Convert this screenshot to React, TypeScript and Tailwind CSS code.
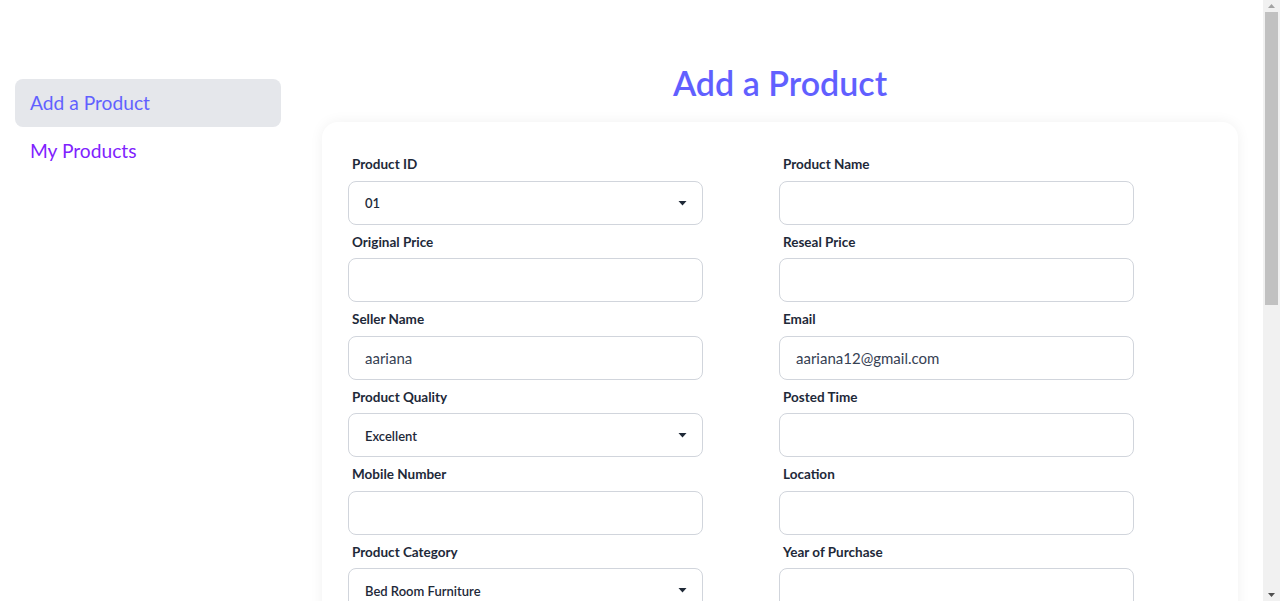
import React from "react";

function Caret() {
  return (
    <svg width="9" height="6" viewBox="0 0 9 6" className="shrink-0">
      <path d="M0.5 1 L8.5 1 L4.5 5.5 Z" fill="#1f2937" />
    </svg>
  );
}

function Label({ children }: { children: React.ReactNode }) {
  return (
    <div className="px-1 pt-[9px] pb-[7px] text-[13.5px] leading-[17.5px] font-bold text-gray-800">{children}</div>
  );
}

function TextField({ label, value }: { label: string; value?: string }) {
  return (
    <div className="flex flex-col">
      <Label>{label}</Label>
      <div className="w-[355px] h-[44px] rounded-lg border border-gray-300 bg-white flex items-center px-4 pt-[2px] text-[15px] text-gray-700">
        {value}
      </div>
    </div>
  );
}

function SelectField({ label, value }: { label: string; value: string }) {
  return (
    <div className="flex flex-col">
      <Label>{label}</Label>
      <div className="w-[355px] h-[44px] rounded-lg border border-gray-300 bg-white flex items-center justify-between pl-4 pr-[15px] text-[13px] font-semibold text-gray-800">
        <span className="pt-[3px]">{value}</span>
        <Caret />
      </div>
    </div>
  );
}

export default function App() {
  return (
    <div
      className="min-h-[1180px] bg-white flex pl-[15px]"
      style={{ fontFamily: 'Lato, "Open Sans", sans-serif' }}
    >
      <aside className="w-[266px] shrink-0 pt-[79px]">
        <div className="h-[48px] rounded-lg bg-gray-200 flex items-center px-[15px] text-[19.2px] text-indigo-500">
          Add a Product
        </div>
        <div className="h-[48px] flex items-center px-[15px] text-[19.2px] text-violet-600">My Products</div>
      </aside>
      <main className="ml-[41px] w-[916px] shrink-0 pt-[63px]">
        <h1 className="text-center text-[34px] leading-[40px] font-semibold text-indigo-500">Add a Product</h1>
        <div className="mt-[19px] rounded-2xl bg-white shadow-[0_0_14px_rgba(0,0,0,0.06)] px-[26px] pt-[25px] pb-10">
          <div className="grid grid-cols-[431px_1fr]">
            <SelectField label="Product ID" value="01" />
            <TextField label="Product Name" />
            <TextField label="Original Price" />
            <TextField label="Reseal Price" />
            <TextField label="Seller Name" value="aariana" />
            <TextField label="Email" value="aariana12@gmail.com" />
            <SelectField label="Product Quality" value="Excellent" />
            <TextField label="Posted Time" />
            <TextField label="Mobile Number" />
            <TextField label="Location" />
            <SelectField label="Product Category" value="Bed Room Furniture" />
            <TextField label="Year of Purchase" />
            <TextField label="Product Image URL" />
            <TextField label="Condition" />
          </div>
          <div className="flex flex-col mt-1">
            <Label>Description</Label>
            <div className="w-[786px] h-[120px] rounded-lg border border-gray-300 bg-white" />
          </div>
          <button className="mt-6 w-[786px] h-[48px] rounded-lg bg-indigo-500 text-white text-sm font-semibold uppercase">
            Add Product
          </button>
        </div>
      </main>
      <div className="fixed right-0 top-0 h-screen w-[17px] bg-[#f1f1f1] flex flex-col items-center">
        <div className="h-[12px] flex items-center justify-center">
          <svg width="7" height="4" viewBox="0 0 7 4"><path d="M0 4 L3.5 0 L7 4 Z" fill="#a3a3a3" /></svg>
        </div>
        <div className="w-[13px] h-[293px] bg-[#c1c1c1]" />
        <div className="flex-1" />
        <div className="h-[12px] flex items-center justify-center">
          <svg width="7" height="4" viewBox="0 0 7 4"><path d="M0 0 L3.5 4 L7 0 Z" fill="#505050" /></svg>
        </div>
      </div>
    </div>
  );
}
